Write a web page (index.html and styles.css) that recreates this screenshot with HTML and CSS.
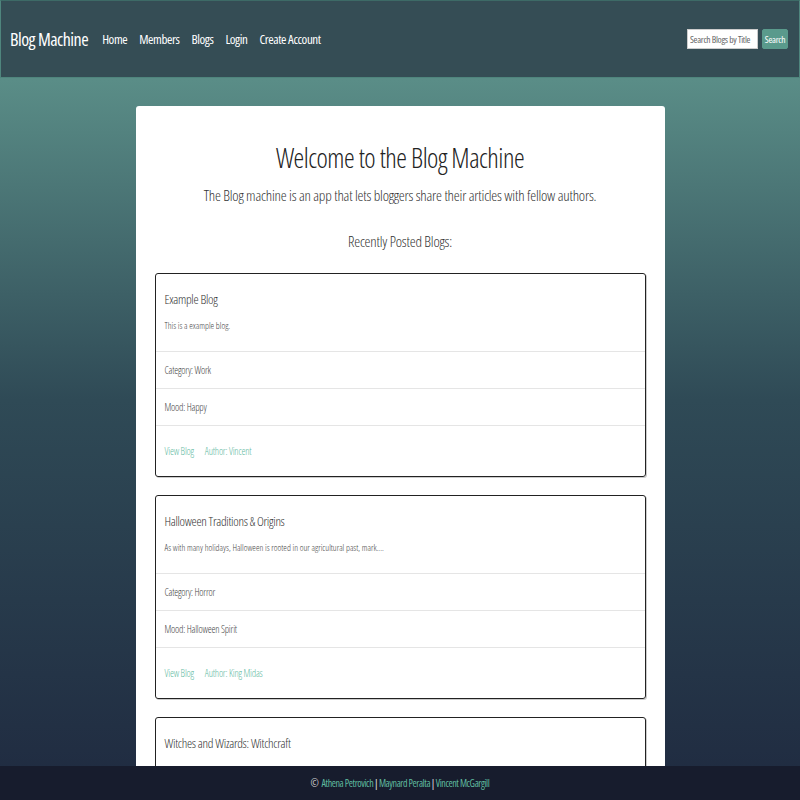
FILE: index.html
```html
<!DOCTYPE html>
<html>
<head>
<meta charset="utf-8">
<title>Blog Machine</title>
<link rel="stylesheet" href="styles.css">
</head>
<body>
<nav class="navbar">
  <div class="nav-left">
    <a class="brand" href="#">Blog Machine</a>
    <a class="nav-link" href="#">Home</a>
    <a class="nav-link" href="#">Members</a>
    <a class="nav-link" href="#">Blogs</a>
    <a class="nav-link" href="#">Login</a>
    <a class="nav-link" href="#">Create Account</a>
  </div>
  <form class="search">
    <input class="search-input" type="text" placeholder="Search Blogs by Title">
    <button class="search-btn" type="button">Search</button>
  </form>
</nav>

<main class="page">
  <section class="panel">
    <h1 class="title">Welcome to the Blog Machine</h1>
    <p class="lead">The Blog machine is an app that lets bloggers share their articles with fellow authors.</p>
    <h2 class="recent">Recently Posted Blogs:</h2>

    <article class="card">
      <div class="card-body">
        <h3 class="card-title">Example Blog</h3>
        <p class="card-text">This is a example blog.</p>
      </div>
      <div class="card-item">Category: Work</div>
      <div class="card-item">Mood: Happy</div>
      <div class="card-foot">
        <a class="card-link" href="#">View Blog</a>
        <a class="card-link" href="#">Author: Vincent</a>
      </div>
    </article>

    <article class="card">
      <div class="card-body">
        <h3 class="card-title">Halloween Traditions &amp; Origins</h3>
        <p class="card-text">As with many holidays, Halloween is rooted in our agricultural past, mark....</p>
      </div>
      <div class="card-item">Category: Horror</div>
      <div class="card-item">Mood: Halloween Spirit</div>
      <div class="card-foot">
        <a class="card-link" href="#">View Blog</a>
        <a class="card-link" href="#">Author: King Midas</a>
      </div>
    </article>

    <article class="card">
      <div class="card-body">
        <h3 class="card-title">Witches and Wizards: Witchcraft</h3>
        <p class="card-text">In light of the witches that haunt our imagination we look at the craft and its history.</p>
      </div>
      <div class="card-item">Category: History</div>
      <div class="card-item">Mood: Curious</div>
      <div class="card-foot">
        <a class="card-link" href="#">View Blog</a>
        <a class="card-link" href="#">Author: Maynard</a>
      </div>
    </article>
  </section>
</main>

<footer class="footer">
  <span class="copy">&copy;</span>
  <a class="foot-link" href="#">Athena Petrovich</a><span class="sep">|</span><a class="foot-link" href="#">Maynard Peralta</a><span class="sep">|</span><a class="foot-link" href="#">Vincent McGargill</a>
</footer>
</body>
</html>
```

FILE: styles.css
```css
* { box-sizing: border-box; }

html, body {
  margin: 0;
  padding: 0;
}

body {
  font-family: "Open Sans", sans-serif;
  font-stretch: 75%;
  min-height: 800px;
  background: linear-gradient(to bottom, #5b918a 0px, #5a8d87 80px, #2f4a56 400px, #1f2a40 800px);
  background-attachment: fixed;
  color: #333;
}

a { text-decoration: none; }

.navbar {
  height: 78px;
  background: #354d55;
  border: 1px solid #4f857d;
  border-top-color: #3d6a66;
  display: flex;
  align-items: center;
  justify-content: space-between;
  padding: 0 11px 0 9px;
}

.nav-left {
  display: flex;
  align-items: center;
}

.brand {
  color: #fff;
  font-size: 18px;
  letter-spacing: -0.5px;
  margin-right: 14px;
}

.nav-link {
  color: #fff;
  font-size: 13px;
  letter-spacing: -0.4px;
  margin-right: 12px;
}

.search {
  display: flex;
  align-items: center;
  gap: 4px;
}

.search-input {
  width: 71px;
  height: 20px;
  border: 1px solid #ccc;
  font-family: inherit;
  font-stretch: 75%;
  font-size: 9.5px;
  letter-spacing: -0.3px;
  padding: 0 2px;
  color: #555;
}

.search-input::placeholder { color: #666; }

.search-btn {
  height: 20px;
  width: 26px;
  padding: 0;
  background: #5a9a8c;
  border: 1px solid #5a9a8c;
  border-radius: 2px;
  color: #fff;
  font-family: inherit;
  font-stretch: 75%;
  font-size: 9.5px;
  letter-spacing: -0.3px;
}

.page {
  display: flex;
  justify-content: center;
  padding-top: 28px;
}

.panel {
  width: 529px;
  background: #fff;
  border-radius: 3px;
  padding: 30px 19px 60px;
  text-align: center;
}

.title {
  margin: 0;
  font-size: 27px;
  font-weight: 300;
  letter-spacing: -0.5px;
  line-height: 44px;
  color: #222;
}

.lead {
  margin: 3px 0 0;
  font-size: 15px;
  line-height: 24px;
  font-weight: 300;
  letter-spacing: -0.2px;
  color: #333;
}

.recent {
  margin: 23px 0 0;
  font-size: 15px;
  font-weight: 300;
  letter-spacing: -0.2px;
  line-height: 22px;
  color: #333;
}

.card {
  margin-top: 21px;
  border: 1px solid #222;
  border-radius: 3px;
  text-align: left;
  box-shadow: 1px 1px 0 rgba(0,0,0,0.2);
}

.card + .card { margin-top: 18px; }

.card-body {
  height: 78px;
  padding: 16px 9px 0;
  border-bottom: 1px solid #e5e5e5;
}

.card-title {
  margin: 0;
  font-size: 13px;
  font-weight: 300;
  letter-spacing: -0.3px;
  line-height: 18px;
  color: #333;
}

.card-text {
  margin: 12px 0 0;
  font-size: 9px;
  font-weight: 300;
  line-height: 12px;
  color: #444;
}

.card-item {
  height: 37px;
  padding: 0 9px;
  display: flex;
  align-items: center;
  font-size: 10px;
  font-weight: 300;
  letter-spacing: -0.2px;
  color: #444;
  border-bottom: 1px solid #e5e5e5;
}

.card-foot {
  height: 50px;
  padding: 0 9px;
  display: flex;
  align-items: center;
  gap: 11px;
}

.card-link {
  color: #5fba9f;
  font-size: 10px;
  font-weight: 300;
  letter-spacing: -0.2px;
}

.footer {
  position: fixed;
  left: 0;
  right: 0;
  bottom: 0;
  height: 34px;
  background: #171c2d;
  display: flex;
  align-items: center;
  justify-content: center;
  font-size: 10px;
  letter-spacing: -0.4px;
  color: #eee;
}

.copy { color: #ddd; margin-right: 3px; }
.foot-link { color: #5fba9f; }
.sep { color: #eee; margin: 0 1px; }
```
